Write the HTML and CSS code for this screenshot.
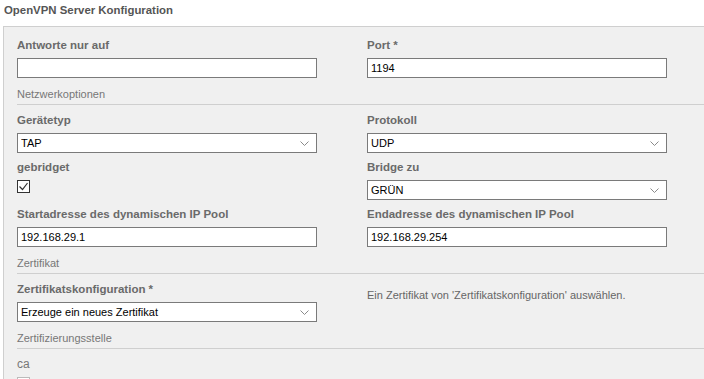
FILE: index.html
```html
<!DOCTYPE html>
<html lang="de">
<head>
  <meta charset="UTF-8" />
  <title>OpenVPN Server Konfiguration</title>
  <link rel="stylesheet" href="styles.css">
</head>
<body>
  <h1 class="title">OpenVPN Server Konfiguration</h1>

  <div class="panel">
    <div class="grid">
      <div class="field left">
        <label>Antworte nur auf</label>
        <input type="text" value="">
      </div>
      <div class="field right">
        <label>Port *</label>
        <input type="text" value="1194">
      </div>

      <div class="section">Netzwerkoptionen</div>

      <div class="field left">
        <label>Gerätetyp</label>
        <div class="select">
          <select><option>TAP</option></select>
          <svg class="chev" width="9" height="5" viewBox="0 0 9 5"><path d="M0.5 0.5 L4.5 4.5 L8.5 0.5" fill="none" stroke="#8a8a8a" stroke-width="1"/></svg>
        </div>
      </div>
      <div class="field right">
        <label>Protokoll</label>
        <div class="select">
          <select><option>UDP</option></select>
          <svg class="chev" width="9" height="5" viewBox="0 0 9 5"><path d="M0.5 0.5 L4.5 4.5 L8.5 0.5" fill="none" stroke="#8a8a8a" stroke-width="1"/></svg>
        </div>
      </div>

      <div class="field left">
        <label>gebridget</label>
        <span class="check">
          <svg width="11" height="11" viewBox="0 0 11 11"><path d="M1.5 5.5 L4.5 8.5 L9.5 2" fill="none" stroke="#333" stroke-width="1.2"/></svg>
        </span>
      </div>
      <div class="field right">
        <label>Bridge zu</label>
        <div class="select">
          <select><option>GRÜN</option></select>
          <svg class="chev" width="9" height="5" viewBox="0 0 9 5"><path d="M0.5 0.5 L4.5 4.5 L8.5 0.5" fill="none" stroke="#8a8a8a" stroke-width="1"/></svg>
        </div>
      </div>

      <div class="field left">
        <label>Startadresse des dynamischen IP Pool</label>
        <input type="text" value="192.168.29.1">
      </div>
      <div class="field right">
        <label>Endadresse des dynamischen IP Pool</label>
        <input type="text" value="192.168.29.254">
      </div>

      <div class="section">Zertifikat</div>

      <div class="field left">
        <label>Zertifikatskonfiguration *</label>
        <div class="select">
          <select><option>Erzeuge ein neues Zertifikat</option></select>
          <svg class="chev" width="9" height="5" viewBox="0 0 9 5"><path d="M0.5 0.5 L4.5 4.5 L8.5 0.5" fill="none" stroke="#8a8a8a" stroke-width="1"/></svg>
        </div>
      </div>
      <div class="field right">
        <p class="help">Ein Zertifikat von 'Zertifikatskonfiguration' auswählen.</p>
      </div>

      <div class="section">Zertifizierungsstelle</div>

      <div class="field left">
        <label class="plain">ca</label>
        <span class="check empty"></span>
      </div>
    </div>
  </div>
</body>
</html>
```

FILE: styles.css
```css
* {
  box-sizing: border-box;
  margin: 0;
  padding: 0;
  font-family: 'Liberation Sans', Arial, sans-serif;
}
body {
  background: #fff;
  width: 704px;
  height: 379px;
  overflow: hidden;
  padding: 0 0 0 3px;
}
.title {
  font-size: 11.4px;
  font-weight: bold;
  color: #555;
  line-height: 14px;
  padding: 3px 0 0 1px;
  height: 26px;
}
.panel {
  width: 701px;
  background: #f0f0f0;
  border-top: 1px solid #cfcfcf;
  border-left: 1px solid #cfcfcf;
  padding: 11px 0 0 13px;
  height: 353px;
  overflow: hidden;
}
.grid {
  display: grid;
  grid-template-columns: 350px 337px;
  row-gap: 7px;
}
.field {
  display: flex;
  flex-direction: column;
  align-items: flex-start;
}
.left { grid-column: 1; }
.right { grid-column: 2; }
.field label {
  font-size: 11.5px;
  font-weight: bold;
  color: #6a6a6a;
  line-height: 14px;
  margin-bottom: 6px;
}
.field label.plain {
  font-weight: normal;
  font-size: 12px;
  color: #777;
}
.section {
  grid-column: 1 / -1;
  font-size: 11px;
  color: #777;
  line-height: 14px;
  padding-bottom: 3px;
  border-bottom: 1px solid #cfcfcf;
  margin: 2px 0 1px;
}
input, select {
  width: 300px;
  height: 20px;
  border: 1px solid #7a7a7a;
  background: #fff;
  font-size: 11px;
  color: #000;
  padding: 0 3px;
  outline: none;
}
.select {
  position: relative;
}
select {
  appearance: none;
  -webkit-appearance: none;
}
.chev {
  position: absolute;
  right: 8px;
  top: 8px;
}
.check {
  width: 13px;
  height: 13px;
  border: 1px solid #333;
  background: #fff;
  display: flex;
  align-items: center;
  justify-content: center;
}
.check.empty {
  border-color: #bbb;
}
.help {
  font-size: 11px;
  color: #666;
  line-height: 14px;
  padding-top: 6px;
}
```
